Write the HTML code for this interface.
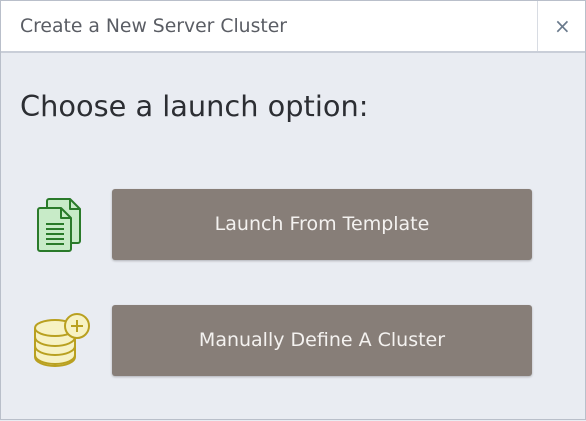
<!DOCTYPE html>
<html><head><meta charset="utf-8"><style>
html,body{margin:0;padding:0;}
body{width:586px;height:420px;overflow:hidden;background:#e9ecf2;font-family:"DejaVu Sans","Liberation Sans",sans-serif;position:relative;box-sizing:border-box;border:1px solid #b9bfca;}
.hdr{position:absolute;left:0;top:0;width:584px;height:50px;background:#fff;border-bottom:2px solid #c9ced8;}
.ttl{position:absolute;left:19px;top:15px;font-size:18.8px;color:#5a5d64;}
.cls{position:absolute;left:536px;top:0;width:48px;height:50px;border-left:1px solid #d8dce3;}
.cls span{position:absolute;left:16px;top:13px;font-size:20px;color:#6a7a8c;}
h1{position:absolute;left:19px;top:88px;margin:0;font-weight:normal;font-size:28.8px;color:#2c2e33;}
.btn{position:absolute;left:111px;width:420px;height:71px;background:#877e78;border-radius:3px;color:#f4f2f0;font-size:19px;text-align:center;line-height:71px;box-shadow:0 1px 2px rgba(0,0,0,.25);}
svg{position:absolute;left:0;top:0;}
</style></head><body>
<div class="hdr"><div class="ttl">Create a New Server Cluster</div><div class="cls"><span>×</span></div></div>
<h1>Choose a launch option:</h1>
<svg width="586" height="420" viewBox="0 0 586 420">
 <g stroke="#2a7a2a" stroke-width="2" stroke-linejoin="round">
  <path d="M48 198h21l10 10v32a2 2 0 0 1-2 2H48a2 2 0 0 1-2-2V200a2 2 0 0 1 2-2z" fill="#c8ebc8"/>
  <path d="M69 198v10h10" fill="none"/>
  <path d="M39 207h21l10 10v31a2 2 0 0 1-2 2H39a2 2 0 0 1-2-2V209a2 2 0 0 1 2-2z" fill="#c8ebc8"/>
  <path d="M60 207v10h10" fill="none"/>
  <path d="M45 223h18M45 228h18M45 233h18M45 238h18M45 243h18" fill="none"/>
 </g>
 <g fill="#f7f2c4" stroke="#b9a020" stroke-width="2">
  <path d="M34 354v2c0 5 9 9 20 9s20-4 20-9v-2"/>
  <path d="M34 345v9c0 5 9 9 20 9s20-4 20-9v-9"/>
  <path d="M34 336v9c0 5 9 9 20 9s20-4 20-9v-9"/>
  <path d="M34 327v9c0 5 9 9 20 9s20-4 20-9v-9"/>
  <ellipse cx="54" cy="327" rx="20" ry="8"/>
  <circle cx="76" cy="325" r="12"/>
 </g>
 <path d="M76 319v12M70 325h12" stroke="#b9a020" stroke-width="2"/>
</svg>
<div class="btn" style="top:188px">Launch From Template</div>
<div class="btn" style="top:304px">Manually Define A Cluster</div>
</body></html>
